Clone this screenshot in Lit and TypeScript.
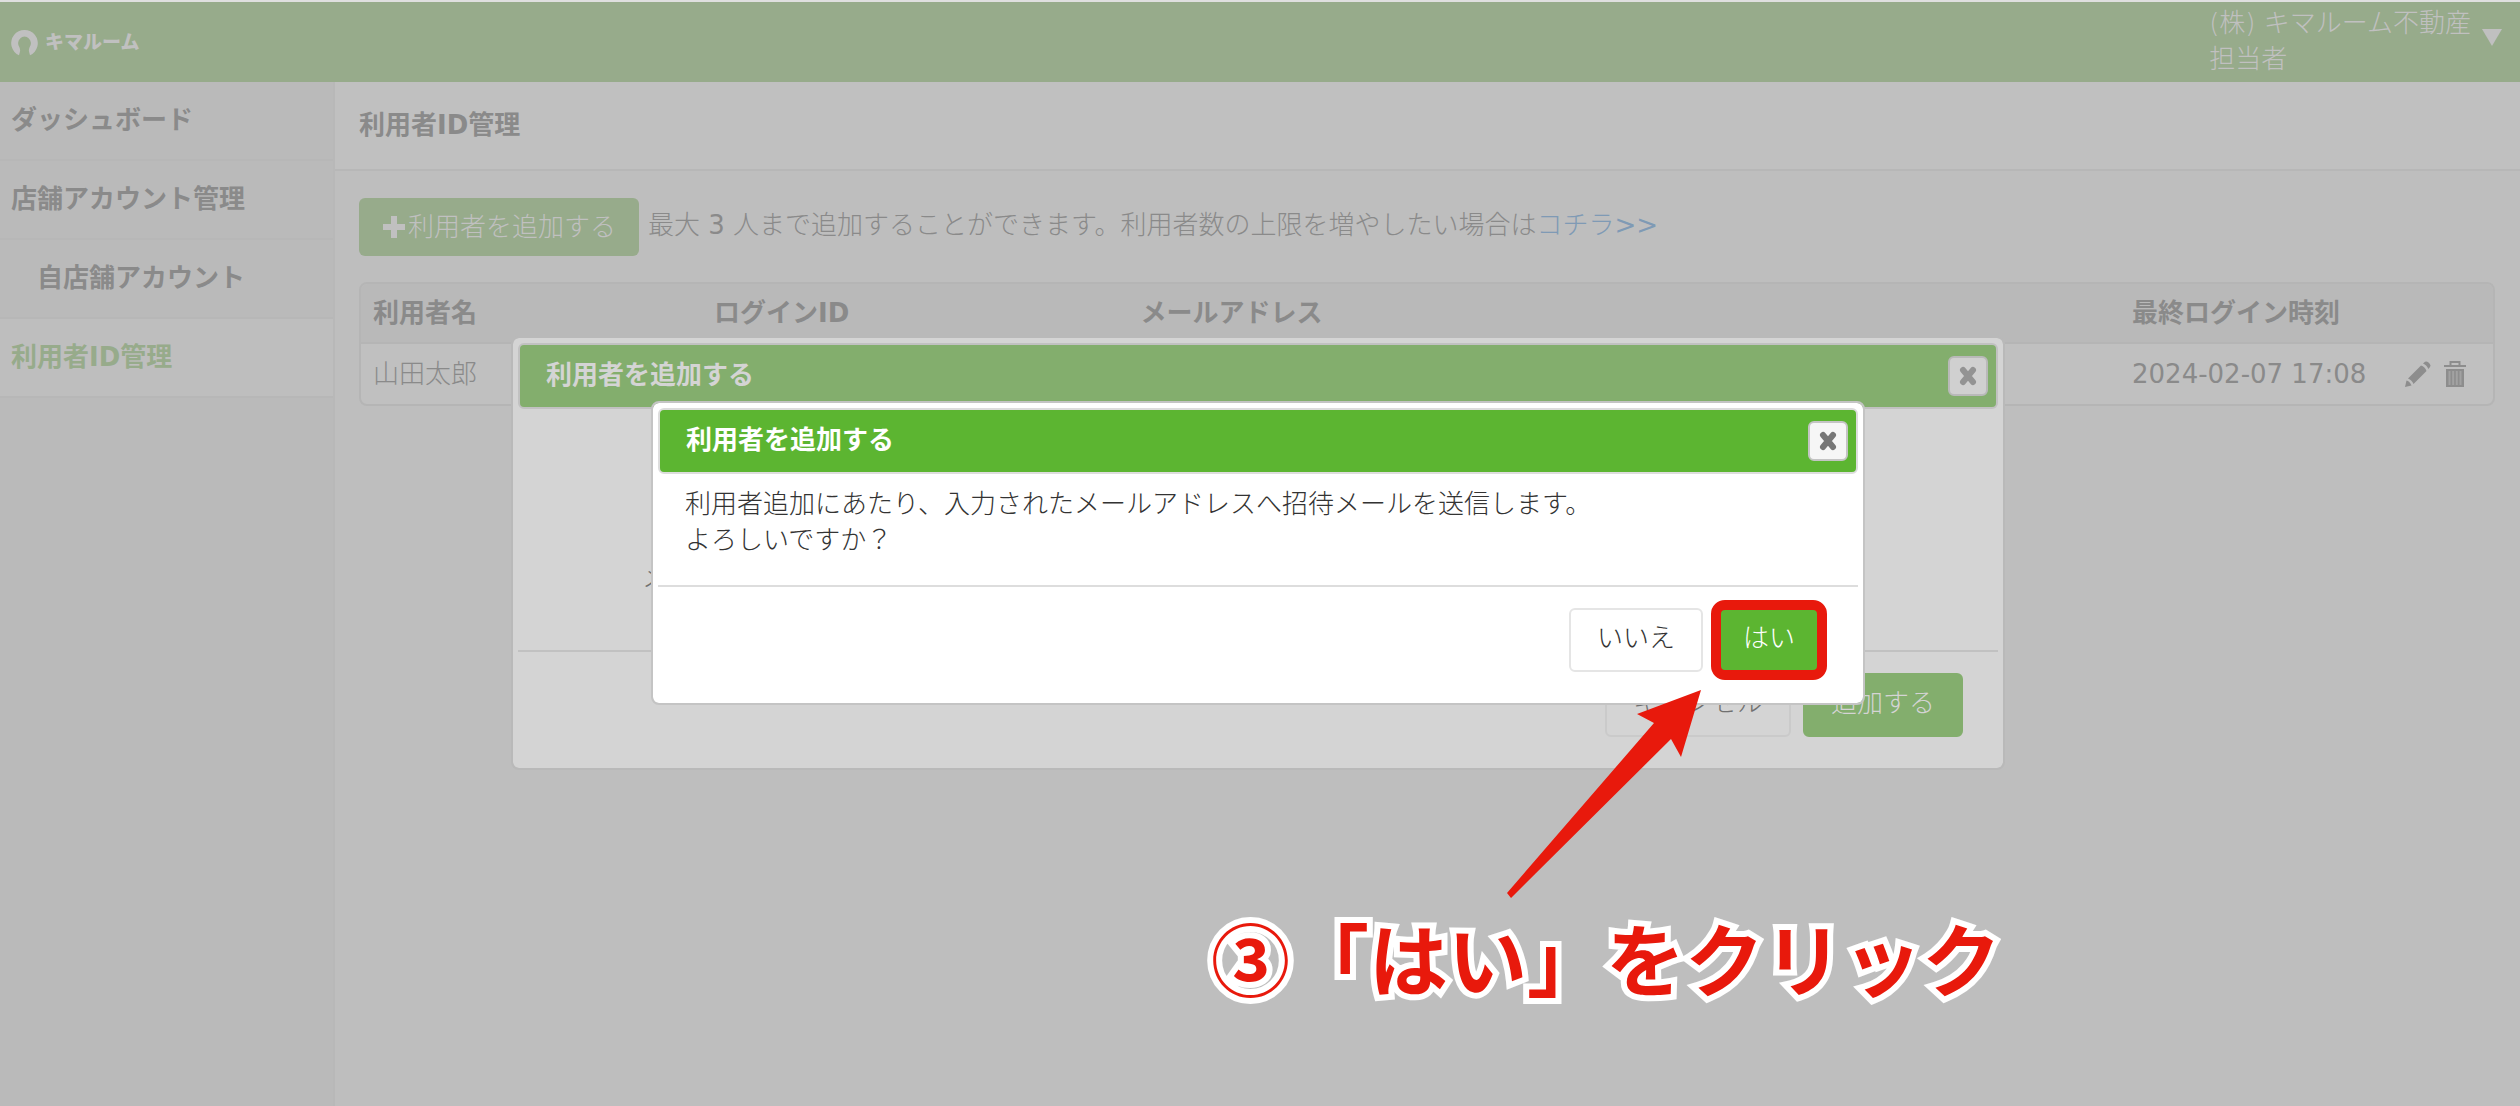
import { LitElement, html, css, svg } from "lit";
import { customElement, property } from "lit/decorators.js";

const closeGlyph = svg`<path d="M4 4 L14 16 M14 4 L4 16" stroke="currentColor" stroke-width="6" stroke-linecap="round" fill="none"/>`;

@customElement("modal-window")
class ModalWindow extends LitElement {
  @property() heading = "";

  static styles = css`
    :host {
      display: flex;
      flex-direction: column;
      box-sizing: border-box;
      padding: 5px;
      border: 2px solid var(--edge);
      border-radius: 8px;
      background: var(--surface);
      background-clip: padding-box;
      color: var(--ink);
    }
    .bar {
      display: flex;
      align-items: center;
      justify-content: space-between;
      box-sizing: border-box;
      height: 66px;
      padding: 0 8px 0 26px;
      border: 2px solid var(--line);
      border-radius: 6px;
      background: var(--accent);
      color: var(--surface);
    }
    .title {
      margin: 0;
      padding-bottom: 3px;
      font-size: 26px;
      line-height: 36px;
      font-weight: 700;
    }
    .close {
      display: grid;
      place-items: center;
      box-sizing: border-box;
      width: 40px;
      height: 40px;
      padding: 0;
      border: 2px solid var(--edge);
      border-radius: 6px;
      background: var(--chip);
      color: var(--cross);
    }
    .foot {
      display: flex;
      justify-content: flex-end;
      gap: 12px;
      padding: 21px 35px 26px;
      border-top: 2px solid var(--line);
    }
  `;

  render() {
    return html`
      <header class="bar">
        <h2 class="title">${this.heading}</h2>
        <button class="close" aria-label="閉じる">
          <svg width="18" height="20" viewBox="0 0 18 20">${closeGlyph}</svg>
        </button>
      </header>
      <div class="body"><slot></slot></div>
      <footer class="foot"><slot name="actions"></slot></footer>
    `;
  }
}

@customElement("app-root")
class AppRoot extends LitElement {
  private nav = [
    { label: "ダッシュボード" },
    { label: "店舗アカウント管理" },
    { label: "自店舗アカウント", sub: true },
    { label: "利用者ID管理", current: true },
  ];

  private columns = ["利用者名", "ログインID", "メールアドレス", "最終ログイン時刻", ""];

  static styles = css`
    :host {
      display: flex;
      flex-direction: column;
      position: relative;
      box-sizing: border-box;
      min-height: 100vh;
      overflow: hidden;
      border-top: 2px solid #dfdfdf;
      background: #bebebe;
      color: #8a8a8a;
      font: 300 26px/36px "DejaVu Sans", "Noto Sans CJK JP", sans-serif;
    }
    a {
      color: inherit;
      text-decoration: none;
    }
    button,
    input {
      font: inherit;
    }
    .latin {
      font-weight: 400;
    }
    .top {
      display: flex;
      align-items: center;
      justify-content: space-between;
      height: 80px;
      padding: 0 18px 0 11px;
      background: #97ab8b;
      color: #c0c0c0;
    }
    .logo {
      display: flex;
      align-items: center;
      gap: 7px;
      font-size: 19px;
      font-weight: 900;
    }
    .account {
      display: flex;
      align-self: flex-start;
      align-items: center;
      gap: 11px;
      padding: 3px 0 0;
      border: 0;
      background: none;
      color: inherit;
      text-align: left;
    }
    .caret {
      margin-bottom: 8px;
    }
    .shell {
      display: flex;
      flex: 1;
    }
    .side {
      flex: 0 0 333px;
      border-right: 2px solid #b8b8b8;
      background: #bababa;
    }
    .item {
      display: block;
      box-sizing: border-box;
      height: 79px;
      padding: 20px 11px 0;
      border-bottom: 2px solid #b7b7b7;
      font-weight: 700;
    }
    .sub {
      padding-left: 37px;
    }
    .current {
      background: #bebebe;
      color: #97ab8b;
    }
    .main {
      flex: 1;
      min-width: 0;
    }
    .head {
      padding: 25px 24px 26px;
      border-bottom: 2px solid #b7b7b7;
      background: #c0c0c0;
    }
    .page-title {
      margin: 0;
      font-size: 26px;
      line-height: 36px;
      font-weight: 700;
    }
    .content {
      padding: 27px 25px 40px 24px;
    }
    .tools {
      display: flex;
      align-items: center;
      gap: 9px;
      margin-bottom: 26px;
    }
    .add {
      display: flex;
      align-items: center;
      gap: 2px;
      height: 58px;
      padding: 0 23px;
      border: 0;
      border-radius: 6px;
      background: #97ab8b;
      color: #c0c0c0;
    }
    .note {
      margin: 0;
      padding-bottom: 4px;
    }
    .more {
      color: #7f9ab5;
    }
    .users {
      width: 100%;
      table-layout: fixed;
      border: 2px solid #b5b5b5;
      border-radius: 8px;
      border-spacing: 0;
      background: #c0c0c0;
      text-align: left;
    }
    .users th {
      box-sizing: border-box;
      height: 60px;
      padding: 0 12px;
      border-bottom: 2px solid #b5b5b5;
      background: #b9b9b9;
      font-weight: 700;
    }
    .users th:first-child {
      border-top-left-radius: 6px;
    }
    .users th:last-child {
      border-top-right-radius: 6px;
    }
    .users td {
      height: 60px;
      padding: 0 12px;
    }
    .c0 {
      width: 16%;
    }
    .c1 {
      width: 20%;
    }
    .c3 {
      width: 272px;
    }
    .c4 {
      width: 101px;
    }
    .row-actions {
      display: flex;
      gap: 12px;
    }
    .icon {
      display: flex;
      padding: 0;
      border: 0;
      background: none;
      color: #8d8d8d;
    }
    .layer {
      position: absolute;
      inset: 0 4px auto 0;
      display: flex;
      justify-content: center;
    }
    .form-layer {
      padding-top: 334px;
    }
    .confirm-layer {
      padding-top: 399px;
    }
    .form {
      --surface: #d4d4d4;
      --edge: #b9b9b9;
      --line: #c1c1c1;
      --accent: #83ae6d;
      --chip: #d0d0d0;
      --cross: #939393;
      --ink: #707070;
      width: 1494px;
      max-width: 90%;
    }
    .confirm {
      --surface: #ffffff;
      --edge: #c4c4c4;
      --line: #dddddd;
      --accent: #5cb531;
      --chip: #f6f6f6;
      --cross: #777777;
      --ink: #333333;
      width: 1214px;
      max-width: 80%;
    }
    .field {
      display: grid;
      grid-template-columns: 306px 1fr;
      align-items: center;
      gap: 24px;
      padding: 141px 220px 44px 0;
    }
    .field label {
      text-align: right;
    }
    .field input {
      box-sizing: border-box;
      height: 56px;
      border: 2px solid #c1c1c1;
      border-radius: 6px;
      background: #d4d4d4;
    }
    .message {
      margin: 0;
      padding: 12px 27px 27px;
    }
    .btn {
      position: relative;
      box-sizing: border-box;
      height: 64px;
      padding: 0 26px 4px;
      border: 2px solid var(--rim);
      border-radius: 6px;
      background: var(--surface);
      color: var(--ink);
    }
    .form .btn {
      --rim: #cacaca;
    }
    .confirm .btn {
      --rim: #e5e5e5;
    }
    .btn.primary {
      border-color: var(--accent);
      background: var(--accent);
      color: var(--surface);
    }
    .marked::after {
      content: "";
      position: absolute;
      inset: -10px -6px;
      border: 10px solid #e8190c;
      border-radius: 14px;
    }
    .arrow {
      position: absolute;
      left: 1500px;
      top: 680px;
    }
    .callout {
      position: absolute;
      left: 1211px;
      top: 895px;
      margin: 0;
      color: #e8190c;
      font: 700 79px/120px "Noto Sans CJK JP", sans-serif;
      white-space: nowrap;
      -webkit-text-stroke: 12px #ffffff;
      stroke-linejoin: round;
      paint-order: stroke fill;
    }
  `;

  render() {
    return html`
      <header class="top">
        <a class="logo" href="#">
          <svg width="27" height="27" viewBox="0 0 27 27">
            <path d="M8 26.3 A13.3 13.3 0 1 1 19 26.3 L18 22.5 Q17.6 20.5 18.5 18.5 A6.4 6.7 0 1 0 8.5 18.5 Q9.4 20.5 9 22.5 Z" fill="currentColor"/>
          </svg>
          <span>キマルーム</span>
        </a>
        <button class="account">
          <span>(株) キマルーム不動産<br />担当者</span>
          <svg class="caret" width="20" height="17" viewBox="0 0 20 17">
            <path d="M0 0 H20 L10 17 Z" fill="currentColor"/>
          </svg>
        </button>
      </header>
      <div class="shell">
        <nav class="side">
          ${this.nav.map(
            (n) => html`<a href="#" class="item ${n.sub ? "sub" : ""} ${n.current ? "current" : ""}">${n.label}</a>`
          )}
        </nav>
        <main class="main">
          <div class="head"><h1 class="page-title">利用者ID管理</h1></div>
          <div class="content">
            <div class="tools">
              <button class="add">
                <svg width="24" height="24" viewBox="0 0 24 24">
                  <path d="M9 1 h6 v8 h8 v6 h-8 v8 h-6 v-8 h-8 v-6 h8 Z" fill="currentColor"/>
                </svg>
                利用者を追加する
              </button>
              <p class="note">最大 <span class="latin">3</span> 人まで追加することができます。利用者数の上限を増やしたい場合は<a class="more" href="#">コチラ<span class="latin">&gt;&gt;</span></a></p>
            </div>
            <table class="users">
              <thead>
                <tr>${this.columns.map((c, i) => html`<th scope="col" class="c${i}">${c}</th>`)}</tr>
              </thead>
              <tbody>
                <tr>
                  <td>山田太郎</td>
                  <td></td>
                  <td></td>
                  <td class="latin">2024-02-07 17:08</td>
                  <td>
                    <div class="row-actions">
                      <button class="icon" aria-label="編集">
                        <svg width="28" height="28" viewBox="0 0 28 28">
                          <path d="M1 27 L2.5 20.5 Q5.5 21 7.5 25.5 Z M4 18.5 L17 5.5 Q21 6.5 22.5 11 L9.5 24 Q8 20 4 18.5 Z M19 3.5 L21 1.8 Q22.5 0.8 24.5 2.5 L25.7 3.7 Q27.3 5.5 26 7 L24.3 9 Q23 5 19 3.5 Z" fill="currentColor"/>
                        </svg>
                      </button>
                      <button class="icon" aria-label="削除">
                        <svg width="22" height="28" viewBox="0 0 22 28">
                          <path d="M6.5 5 V2 H15.5 V5" fill="none" stroke="currentColor" stroke-width="2"/>
                          <path d="M0 5 H22 V7 H0 Z M2 9 H20 V27 H2 Z" fill="currentColor"/>
                          <path d="M5.5 11 V25 M9.2 11 V25 M12.8 11 V25 M16.5 11 V25" stroke="#a2a2a2" stroke-width="2"/>
                        </svg>
                      </button>
                    </div>
                  </td>
                </tr>
              </tbody>
            </table>
          </div>
        </main>
      </div>

      <div class="layer form-layer">
        <modal-window class="form" role="dialog" heading="利用者を追加する">
          <div class="field">
            <label for="mail">メールアドレス</label>
            <input id="mail" type="email" />
          </div>
          <button slot="actions" class="btn">キャンセル</button>
          <button slot="actions" class="btn primary">追加する</button>
        </modal-window>
      </div>

      <div class="layer confirm-layer">
        <modal-window class="confirm" role="dialog" heading="利用者を追加する">
          <p class="message">利用者追加にあたり、入力されたメールアドレスへ招待メールを送信します。<br />よろしいですか？</p>
          <button slot="actions" class="btn">いいえ</button>
          <button slot="actions" class="btn primary marked">はい</button>
        </modal-window>
      </div>

      <svg class="arrow" width="210" height="225" viewBox="1500 682 210 225">
        <path d="M1701 690 L1637 714 L1654 723 L1507 893 L1511 898 L1671 739 L1681 757 Z" fill="#e8190c"/>
      </svg>
      <p class="callout">③「はい」をクリック</p>
    `;
  }
}
